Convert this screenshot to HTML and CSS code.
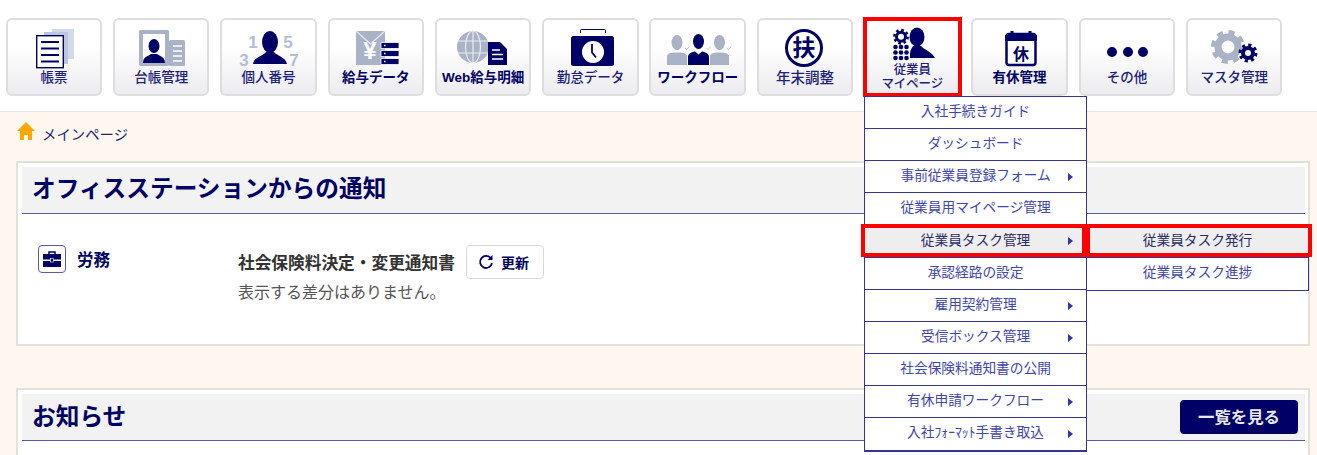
FILE: index.html
```html
<!DOCTYPE html>
<html lang="ja">
<head>
<meta charset="utf-8">
<title>メインページ</title>
<link rel="stylesheet" href="styles.css">
</head>
<body>

<header class="top">
  <nav class="nav">
    <a class="nav-btn">
      <svg class="nav-icon" viewBox="0 0 60 40">
        <rect x="28" y="1" width="22" height="30" fill="#d3dbea"/>
        <rect x="20" y="4" width="24" height="32" fill="#bcc6dc"/>
        <rect x="12.7" y="7.700" width="26.600" height="32" fill="#fff" stroke="#000066" stroke-width="1.400"/>
        <path d="M17 14h18M17 20.500h18M17 27h18M17 33.500h18" stroke="#000066" stroke-width="2"/>
      </svg>
      <span class="nav-label">帳票</span>
    </a>
    <a class="nav-btn">
      <svg class="nav-icon" viewBox="0 0 60 40">
        <rect x="8" y="2" width="30" height="36" rx="1.500" fill="#aab2c6"/>
        <rect x="38" y="12" width="16" height="26" rx="1.500" fill="#aab2c6"/>
        <rect x="12" y="6" width="22" height="29" fill="#fff"/>
        <ellipse cx="23" cy="18" rx="5.500" ry="7" fill="#000066"/>
        <path d="M12 35c0-6 5-7 8-9h6c3 2 8 3 8 9z" fill="#000066"/>
        <path d="M42 18h9M42 23h9M42 28h9M42 33h9" stroke="#fff" stroke-width="1.300"/>
      </svg>
      <span class="nav-label">台帳管理</span>
    </a>
    <a class="nav-btn">
      <svg class="nav-icon" viewBox="0 0 60 40">
        <text class="digit" x="14" y="20">1</text>
        <text class="digit" x="49" y="20">5</text>
        <text class="digit" x="5" y="38">3</text>
        <text class="digit" x="55" y="38">7</text>
        <ellipse cx="31" cy="14" rx="8" ry="11" fill="#000066"/>
        <path d="M14 36c1-7 10-8 13-12h8c3 4 12 5 13 12z" fill="#000066"/>
      </svg>
      <span class="nav-label">個人番号</span>
    </a>
    <a class="nav-btn">
      <svg class="nav-icon" viewBox="0 0 60 40">
        <rect x="10" y="3" width="29" height="34" fill="#aab2c6"/>
        <path d="M10 3l14.500 13L39 3" fill="none" stroke="#e6e9f0" stroke-width="1.200"/>
        <text class="yen" x="24" y="31">¥</text>
        <path d="M35 14.500h18v6H35zM35 22.500h18v6H35zM35 30.500h18v6H35z" fill="#000066" stroke="#fff" stroke-width=".8"/>
        <path d="M38 17.500h1.500M38 25.500h1.500M38 33.500h1.500" stroke="#fff" stroke-width="1.500"/>
      </svg>
      <span class="nav-label nav-label-bold">給与データ</span>
    </a>
    <a class="nav-btn">
      <svg class="nav-icon" viewBox="0 0 60 40">
        <circle cx="20" cy="19" r="16" fill="#aab2c6"/>
        <g fill="none" stroke="#e8ebf2" stroke-width="1.200">
          <ellipse cx="20" cy="19" rx="7.500" ry="16"/>
          <path d="M20 3v32M5 13h30M5 25h30"/>
        </g>
        <path d="M35 14h12l7 7v16H35z" fill="#000066"/>
        <path d="M39 22h8M39 26.500h11M39 31h11" stroke="#fff" stroke-width="1.500"/>
      </svg>
      <span class="nav-label nav-label-bold">Web給与明細</span>
    </a>
    <a class="nav-btn">
      <svg class="nav-icon" viewBox="0 0 60 40">
        <rect x="20.500" y="1.500" width="25" height="12" rx="1" fill="#fff" stroke="#000066" stroke-width="1"/>
        <rect x="11" y="8" width="43" height="30" rx="2.500" fill="#000066"/>
        <rect x="19.500" y="5" width="27" height="3" fill="#fff"/>
        <circle cx="33" cy="24" r="11" fill="#fff"/>
        <path d="M32 16v8.500l4 5" fill="none" stroke="#000066" stroke-width="1.800"/>
      </svg>
      <span class="nav-label">勤怠データ</span>
    </a>
    <a class="nav-btn">
      <svg class="nav-icon" viewBox="0 0 60 40">
        <ellipse cx="9" cy="14.500" rx="5.500" ry="7.500" fill="#aab2c6"/>
        <path d="M-1 37v-8c0-3 3-4 6-4.500h8c3 .5 6 1.500 6 4.500v8z" fill="#aab2c6"/>
        <ellipse cx="51.500" cy="14.500" rx="5.500" ry="7.500" fill="#aab2c6"/>
        <path d="M42 37v-8c0-3 3-4 6-4.500h7c3 .5 6 1.500 6 4.500v8z" fill="#aab2c6"/>
        <ellipse cx="30.500" cy="13.500" rx="5.500" ry="7.500" fill="#000066"/>
        <path d="M20 37v-8c0-3 3-5 7-5.500l3.500 3 3.500-3c4 .5 7 2.500 7 5.500v8z" fill="#000066"/>
        <path d="M17 20l1.500 1.500 3-3M38.500 20l1.500 1.500 3-3M59 20l1.500 1.500 3-3" fill="none" stroke="#b9c0d2" stroke-width=".9"/>
      </svg>
      <span class="nav-label nav-label-bold">ワークフロー</span>
    </a>
    <a class="nav-btn">
      <svg class="nav-icon" viewBox="0 0 60 40">
        <circle cx="29" cy="20" r="17.500" fill="#fff" stroke="#000066" stroke-width="3"/>
        <text class="stamp" x="29" y="28">扶</text>
      </svg>
      <span class="nav-label nav-label-lg">年末調整</span>
    </a>

    <div class="nav-item">
      <a class="nav-btn nav-btn-marked">
        <svg class="nav-icon nav-icon-small" viewBox="0 0 60 32">
          <circle cx="19" cy="8.700" r="4.500" fill="none" stroke="#000066" stroke-width="3"/>
          <circle cx="19" cy="8.700" r="6.700" fill="none" stroke="#000066" stroke-width="2.500" stroke-dasharray="2.630 2.630"/>
          <g fill="#000066">
            <circle cx="13.500" cy="19" r="2.300"/><circle cx="19" cy="19" r="2.300"/><circle cx="24.500" cy="19" r="2.300"/>
            <circle cx="13.500" cy="24.500" r="2.300"/><circle cx="19" cy="24.500" r="2.300"/><circle cx="24.500" cy="24.500" r="2.300"/>
            <circle cx="13.500" cy="30" r="2.300"/><circle cx="19" cy="30" r="2.300"/><circle cx="24.500" cy="30" r="2.300"/>
            <ellipse cx="35" cy="9" rx="7.500" ry="9.500"/>
            <path d="M28 30v-4c0-4 2-6 3-8h8c2 3 10 5 14 12z"/>
          </g>
        </svg>
        <span class="nav-label nav-label-two">従業員<br>マイページ</span>
      </a>
      <ul class="menu">
        <li class="menu-item"><span class="menu-text">入社手続きガイド</span></li>
        <li class="menu-item"><span class="menu-text">ダッシュボード</span></li>
        <li class="menu-item"><span class="menu-text">事前従業員登録フォーム</span><i class="arrow"></i></li>
        <li class="menu-item"><span class="menu-text">従業員用マイページ管理</span></li>
        <li class="menu-item menu-item-marked"><span class="menu-text">従業員タスク管理</span><i class="arrow"></i>
          <ul class="menu submenu">
            <li class="menu-item menu-item-marked"><span class="menu-text">従業員タスク発行</span></li>
            <li class="menu-item"><span class="menu-text">従業員タスク進捗</span></li>
          </ul>
        </li>
        <li class="menu-item"><span class="menu-text">承認経路の設定</span></li>
        <li class="menu-item"><span class="menu-text">雇用契約管理</span><i class="arrow"></i></li>
        <li class="menu-item"><span class="menu-text">受信ボックス管理</span><i class="arrow"></i></li>
        <li class="menu-item"><span class="menu-text">社会保険料通知書の公開</span></li>
        <li class="menu-item"><span class="menu-text">有休申請ワークフロー</span><i class="arrow"></i></li>
        <li class="menu-item"><span class="menu-text">入社ﾌｫｰﾏｯﾄ手書き取込</span><i class="arrow"></i></li>
      </ul>
    </div>

    <a class="nav-btn">
      <svg class="nav-icon" viewBox="0 0 60 40">
        <rect x="16.500" y="6" width="29" height="31" rx="2.500" fill="#fff" stroke="#000066" stroke-width="2.500"/>
        <path d="M15 7h32v6H15z" fill="#000066"/>
        <path d="M22 3v6M40 3v6" stroke="#000066" stroke-width="3"/>
        <text class="stamp stamp-small" x="31" y="32">休</text>
      </svg>
      <span class="nav-label nav-label-bold">有休管理</span>
    </a>
    <a class="nav-btn">
      <svg class="nav-icon" viewBox="0 0 60 40">
        <circle cx="15" cy="24" r="5" fill="#000066"/>
        <circle cx="31" cy="24" r="5" fill="#000066"/>
        <circle cx="46" cy="24" r="5" fill="#000066"/>
      </svg>
      <span class="nav-label">その他</span>
    </a>
    <a class="nav-btn">
      <svg class="nav-icon" viewBox="0 0 60 40">
        <circle cx="24" cy="19" r="10" fill="none" stroke="#aab2c6" stroke-width="7"/>
        <circle cx="24" cy="19" r="14.500" fill="none" stroke="#aab2c6" stroke-width="5" stroke-dasharray="6 5.390"/>
        <circle cx="44" cy="25" r="5" fill="none" stroke="#000066" stroke-width="4"/>
        <circle cx="44" cy="25" r="8" fill="none" stroke="#000066" stroke-width="3" stroke-dasharray="3.140 3.140"/>
      </svg>
      <span class="nav-label">マスタ管理</span>
    </a>
  </nav>
</header>

<main class="main">
  <div class="crumb">
    <svg class="crumb-icon" viewBox="0 0 18 18">
      <path d="M9 0L0 9h3v9h4v-5h4v5h4V9h3z" fill="#ffa800"/>
    </svg>
    <span class="crumb-text">メインページ</span>
  </div>

  <section class="card card-notice">
    <h2 class="card-title">オフィスステーションからの通知</h2>
    <div class="notice">
      <div class="notice-kind">
        <span class="kind-icon">
          <svg viewBox="0 0 18 16" width="18" height="16">
            <path d="M6 3V1h6v2" fill="none" stroke="#000066" stroke-width="1.500"/>
            <path d="M0 3h18v5.500H0zM0 10h18v6H0z" fill="#000066"/>
            <rect x="7.500" y="7.500" width="3" height="3.500" fill="#000066" stroke="#fff" stroke-width=".6"/>
          </svg>
        </span>
        <span class="kind-name">労務</span>
      </div>
      <div class="notice-body">
        <div class="notice-head">
          <span class="notice-title">社会保険料決定・変更通知書</span>
          <a class="reload-btn">
            <svg viewBox="0 0 16 16" width="16" height="16">
              <path d="M13 4.500A6 6 0 1 0 14 9" fill="none" stroke="#000066" stroke-width="1.800"/>
              <path d="M14.500 1v5h-5z" fill="#000066"/>
            </svg>
            更新
          </a>
        </div>
        <p class="notice-text">表示する差分はありません。</p>
      </div>
    </div>
  </section>

  <section class="card card-news">
    <div class="card-title card-title-row">
      <h2 class="card-title-text">お知らせ</h2>
      <a class="list-btn">一覧を見る</a>
    </div>
  </section>
</main>

</body>
</html>
```

FILE: styles.css
```css
* {
  box-sizing: border-box;
}

html, body {
  height: 455px;
  overflow: hidden;
}

body {
  margin: 0;
  background-color: #fef7ef;
  font-family: "Liberation Sans", "Noto Sans CJK JP", sans-serif;
  color: #000066;
}

ul {
  list-style: none;
  margin: 0;
  padding: 0;
}

/* top navigation */
.top {
  height: 112px;
  background-color: #ffffff;
  border-bottom: 1px solid #e6e6e6;
  padding: 18px 0 0 5.7px;
}

.nav {
  display: flex;
  gap: 10.8px;
}

.nav-item {
  position: relative;
  z-index: 5;
}

.nav-btn {
  display: flex;
  flex-direction: column;
  align-items: center;
  width: 96.5px;
  height: 78px;
  padding-top: 8px;
  background: linear-gradient(#ffffff 35%, #ececf0);
  border: 2px solid #dedede;
  border-radius: 6px;
}

.nav-btn-marked {
  border-color: transparent;
  border-radius: 0;
  outline: 4px solid #ff0000;
  outline-offset: -3px;
}

.nav-icon {
  width: 60px;
  height: 40px;
  flex: none;
  overflow: visible;
}

.nav-icon-small {
  height: 32px;
}

.nav-label {
  font-size: 13.5px;
  line-height: 20px;
  font-weight: 500;
  color: #20207a;
  white-space: nowrap;
}

.nav-label-bold {
  font-weight: 700;
  color: #000066;
}

.nav-label-lg {
  font-size: 14.5px;
}

.nav-label-two {
  margin-top: 3px;
  font-size: 12.4px;
  line-height: 14px;
  text-align: center;
}

.digit {
  font: 700 17px "Liberation Sans", sans-serif;
  fill: #b4bdd4;
  text-anchor: middle;
}

.yen {
  font: 700 24px "Liberation Sans", sans-serif;
  fill: #ffffff;
  text-anchor: middle;
}

.stamp {
  font: 700 23px "Noto Sans CJK JP", sans-serif;
  fill: #000066;
  text-anchor: middle;
}

.stamp-small {
  font-size: 16px;
}

/* dropdown */
.menu {
  position: absolute;
  top: 78px;
  left: 0;
  width: 223px;
  background-color: #ffffff;
  border: 1px solid #333399;
  border-bottom-width: 2px;
}

.menu-item {
  position: relative;
  display: grid;
  grid-template-columns: 1fr auto 1fr;
  align-items: center;
  height: 32px;
  border-bottom: 1px solid #333399;
  font-size: 13.7px;
  color: #3f45b5;
}

.menu-item:last-child {
  border-bottom: none;
}

.menu-text {
  grid-column: 2;
  margin-bottom: 6px;
  white-space: nowrap;
}

.arrow {
  grid-column: 3;
  justify-self: end;
  width: 0;
  height: 0;
  margin-right: 13px;
  border-left: 5px solid #3333aa;
  border-top: 4.5px solid transparent;
  border-bottom: 4.5px solid transparent;
}

.menu-item-marked {
  height: 33px;
  background-color: #eeeeee;
  color: #2b2b5e;
  z-index: 2;
}

.menu-item-marked > .menu-text {
  margin-bottom: 4px;
}

/* red frame laid over the marked row */
.menu-item-marked::after {
  content: "";
  position: absolute;
  top: -1px;
  right: 0;
  bottom: 0;
  left: -4px;
  border: 4px solid #ff0000;
  pointer-events: none;
}

.submenu {
  top: -1px;
  left: 100%;
  border-bottom-width: 1px;
}

.submenu .menu-item-marked::after {
  right: -4px;
  left: -1px;
}

/* main area */
.main {
  padding: 0 7px 0 16px;
}

.crumb {
  display: flex;
  align-items: center;
  gap: 7px;
  height: 49px;
  padding: 0 0 11px 1px;
  font-size: 14.4px;
  color: #1f1f70;
}

.crumb-icon {
  width: 18px;
  height: 18px;
}

.crumb-text {
  margin-top: 4px;
}

.card {
  background-color: #ffffff;
  border: 2px solid #e4e1dd;
  padding: 4px 3px 4px 4px;
}

.card-notice {
  height: 185px;
  margin-bottom: 42px;
}

.card-news {
  height: 67px;
  border-bottom: none;
  padding-bottom: 0;
}

.card-title {
  height: 47px;
  margin: 0;
  padding: 0 10px;
  background-color: #f2f2f2;
  border-bottom: 1.500px solid #5a5aa8;
  font-size: 23.700px;
  line-height: 44px;
  font-weight: 700;
  color: #000066;
}

.card-title-row {
  display: flex;
  justify-content: space-between;
  align-items: center;
  padding-right: 7px;
}

.card-title-text {
  margin: 0;
  font-size: 23.700px;
}

.list-btn {
  width: 118px;
  height: 34px;
  background-color: #000066;
  border-radius: 4px;
  font-size: 16.4px;
  line-height: 34px;
  font-weight: 700;
  text-align: center;
  color: #e8e8f2;
}

.notice {
  display: flex;
  padding: 31px 0 0 16px;
}

.notice-kind {
  display: flex;
  align-items: center;
  gap: 11px;
  width: 200px;
  height: 28px;
}

.kind-icon {
  display: flex;
  align-items: center;
  justify-content: center;
  width: 28px;
  height: 28px;
  border: 1px solid #5a5aa8;
  border-radius: 4px;
}

.kind-name {
  font-size: 16.5px;
  font-weight: 700;
}

.notice-head {
  display: flex;
  align-items: center;
  gap: 11px;
}

.notice-title {
  font-size: 16.7px;
  font-weight: 700;
  color: #333333;
}

.reload-btn {
  display: flex;
  align-items: center;
  justify-content: center;
  gap: 7px;
  width: 78px;
  height: 34px;
  padding-right: 3px;
  background-color: #ffffff;
  border: 1px solid #d8d8d8;
  border-radius: 4px;
  font-size: 14px;
  font-weight: 700;
}

.notice-text {
  margin: 3px 0 0;
  font-size: 16px;
  line-height: 22px;
  color: #555555;
}
```
